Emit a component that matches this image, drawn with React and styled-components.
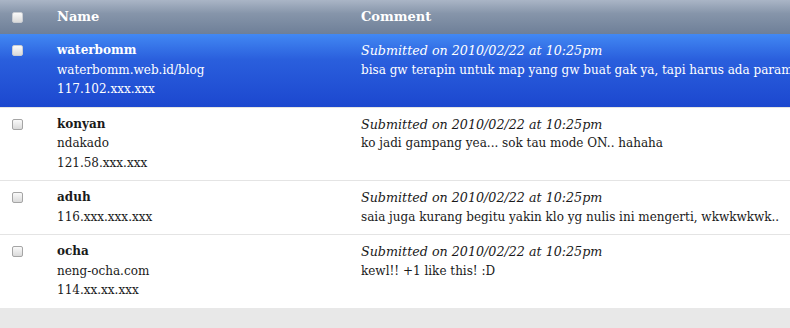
import styled, { createGlobalStyle } from 'styled-components';

const GlobalStyle = createGlobalStyle`
  html, body {
    margin: 0;
    padding: 0;
    background: #e8e8e8;
    overflow: hidden;
  }
  body {
    font-family: "DejaVu Serif", "Liberation Serif", serif;
  }
`;

const Table = styled.div`
  width: 100%;
  background: #ffffff;
`;

const Row = styled.div`
  display: grid;
  grid-template-columns: 57px 304px 1fr;
  box-sizing: border-box;
  padding: ${(p) => (p.$head ? '0' : '7px 0 7px')};
  height: ${(p) => (p.$head ? '34px' : 'auto')};
  align-items: ${(p) => (p.$head ? 'center' : 'start')};
  border-bottom: ${(p) => (p.$last || p.$head ? 'none' : '1px solid #e4e4e4')};
  color: ${(p) => (p.$head || p.$selected ? '#ffffff' : '#1a1a1a')};
  background: ${(p) =>
    p.$head
      ? 'linear-gradient(#aab5c6 0%, #8695aa 40%, #6e7f98 100%)'
      : p.$selected
      ? 'linear-gradient(#4288f3 0%, #2a5fdd 35%, #1c47cf 100%)'
      : '#ffffff'};
  font-size: 12px;
  line-height: 19.5px;
`;

const CheckCell = styled.div`
  padding-left: 12px;
  padding-top: ${(p) => (p.$head ? '0' : '4px')};
  display: flex;
  align-items: center;
`;

const Check = styled.span`
  display: block;
  width: 11px;
  height: 11px;
  box-sizing: border-box;
  border: 1px solid ${(p) => (p.$light ? '#c9cdd3' : '#a5a5a5')};
  border-radius: 2px;
  background: linear-gradient(#fafafa, #dadada);
`;

const HeadLabel = styled.div`
  font-weight: bold;
  font-size: 13px;
  color: #ffffff;
`;

const Cell = styled.div`
  display: flex;
  flex-direction: column;
  white-space: nowrap;
`;

const Author = styled.span`
  font-weight: bold;
`;

const Meta = styled.span`
  font-style: italic;
  font-size: 12.7px;
`;

const comments = [
  {
    name: 'waterbomm',
    url: 'waterbomm.web.id/blog',
    ip: '117.102.xxx.xxx',
    text: 'bisa gw terapin untuk map yang gw buat gak ya, tapi harus ada parameter lain kali ya...',
    selected: true,
  },
  {
    name: 'konyan',
    url: 'ndakado',
    ip: '121.58.xxx.xxx',
    text: 'ko jadi gampang yea... sok tau mode ON.. hahaha',
  },
  {
    name: 'aduh',
    ip: '116.xxx.xxx.xxx',
    text: 'saia juga kurang begitu yakin klo yg nulis ini mengerti, wkwkwkwk..',
  },
  {
    name: 'ocha',
    url: 'neng-ocha.com',
    ip: '114.xx.xx.xxx',
    text: 'kewl!! +1 like this! :D',
  },
];

const App = () => {
  return (
    <>
      <GlobalStyle />
      <Table>
        <Row $head>
          <CheckCell $head>
            <Check $light />
          </CheckCell>
          <HeadLabel>Name</HeadLabel>
          <HeadLabel>Comment</HeadLabel>
        </Row>
        {comments.map((c, i) => (
          <Row key={c.name} $selected={c.selected} $last={i === comments.length - 1}>
            <CheckCell>
              <Check $light={c.selected} />
            </CheckCell>
            <Cell>
              <Author>{c.name}</Author>
              {c.url && <span>{c.url}</span>}
              <span>{c.ip}</span>
            </Cell>
            <Cell>
              <Meta>Submitted on 2010/02/22 at 10:25pm</Meta>
              <span>{c.text}</span>
            </Cell>
          </Row>
        ))}
      </Table>
    </>
  );
};

export default App;
